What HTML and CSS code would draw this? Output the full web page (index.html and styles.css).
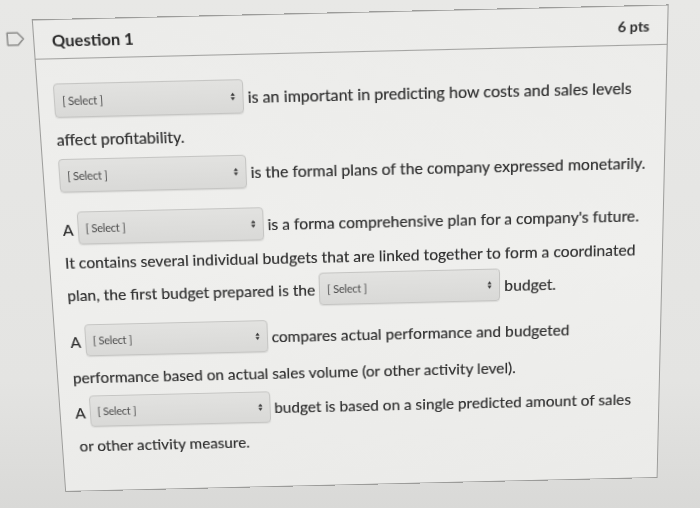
FILE: index.html
```html
<!DOCTYPE html>
<html lang="en">
<head>
<meta charset="utf-8">
<title>Question 1</title>
<link rel="stylesheet" href="styles.css">
</head>
<body>
<div class="page">
  <div class="stage">
    <div class="gutter">
      <svg class="flag" width="18" height="14" viewBox="0 0 18 14" aria-hidden="true">
        <path d="M1.2 1.2 H11.2 L16.6 7 L11.2 12.8 H1.2 Z" fill="none" stroke="#8d8d8b" stroke-width="1.5" stroke-linejoin="round"/>
      </svg>
    </div>
    <div class="card">
      <div class="card-head">
        <h2 class="q-title">Question 1</h2>
        <span class="pts">6 pts</span>
      </div>
      <div class="card-body">
        <div class="line l1">
          <span class="sel"><span class="sel-text">[ Select ]</span><svg class="arrows" width="6" height="10" viewBox="0 0 6 10"><path d="M0.5 4 L3 0.5 L5.5 4 Z M0.5 6 L3 9.5 L5.5 6 Z" fill="#333"/></svg></span>
          <span class="txt">is an important in predicting how costs and sales levels</span>
        </div>
        <div class="line l2"><span class="txt">affect profitability.</span></div>
        <div class="line l3">
          <span class="sel"><span class="sel-text">[ Select ]</span><svg class="arrows" width="6" height="10" viewBox="0 0 6 10"><path d="M0.5 4 L3 0.5 L5.5 4 Z M0.5 6 L3 9.5 L5.5 6 Z" fill="#333"/></svg></span>
          <span class="txt">is the formal plans of the company expressed monetarily.</span>
        </div>
        <div class="line l4">
          <span class="txt art">A</span>
          <span class="sel"><span class="sel-text">[ Select ]</span><svg class="arrows" width="6" height="10" viewBox="0 0 6 10"><path d="M0.5 4 L3 0.5 L5.5 4 Z M0.5 6 L3 9.5 L5.5 6 Z" fill="#333"/></svg></span>
          <span class="txt">is a forma comprehensive plan for a company's future.</span>
        </div>
        <div class="line l5"><span class="txt">It contains several individual budgets that are linked together to form a coordinated</span></div>
        <div class="line l6">
          <span class="txt">plan, the first budget prepared is the</span>
          <span class="sel sel-short"><span class="sel-text">[ Select ]</span><svg class="arrows" width="6" height="10" viewBox="0 0 6 10"><path d="M0.5 4 L3 0.5 L5.5 4 Z M0.5 6 L3 9.5 L5.5 6 Z" fill="#333"/></svg></span>
          <span class="txt">budget.</span>
        </div>
        <div class="line l7">
          <span class="txt art">A</span>
          <span class="sel"><span class="sel-text">[ Select ]</span><svg class="arrows" width="6" height="10" viewBox="0 0 6 10"><path d="M0.5 4 L3 0.5 L5.5 4 Z M0.5 6 L3 9.5 L5.5 6 Z" fill="#333"/></svg></span>
          <span class="txt">compares actual performance and budgeted</span>
        </div>
        <div class="line l8"><span class="txt">performance based on actual sales volume (or other activity level).</span></div>
        <div class="line l9">
          <span class="txt art">A</span>
          <span class="sel"><span class="sel-text">[ Select ]</span><svg class="arrows" width="6" height="10" viewBox="0 0 6 10"><path d="M0.5 4 L3 0.5 L5.5 4 Z M0.5 6 L3 9.5 L5.5 6 Z" fill="#333"/></svg></span>
          <span class="txt">budget is based on a single predicted amount of sales</span>
        </div>
        <div class="line l10"><span class="txt">or other activity measure.</span></div>
      </div>
    </div>
  </div>
</div>
</body>
</html>
```

FILE: styles.css
```css
html, body {
  margin: 0;
  padding: 0;
}

body {
  width: 700px;
  height: 508px;
  overflow: hidden;
  background: linear-gradient(180deg, #e8e8e6 0%, #e4e4e2 75%, #d9d9d7 100%);
  font-family: Lato, "Open Sans", "Liberation Sans", sans-serif;
  color: #2e2e2e;
}

.page {
  padding: 19px 0 0 1px;
}

.stage {
  display: flex;
  align-items: flex-start;
  transform-origin: 355px 238px;
  transform: perspective(800px) rotateZ(-1.35deg) rotateX(-7deg);
}

.gutter {
  width: 48px;
  flex: none;
  display: flex;
  justify-content: flex-start;
  padding-left: 22px;
  padding-top: 11px;
  box-sizing: border-box;
}

.flag {
  display: block;
}

.card {
  width: 614px;
  flex: none;
  border: 1px solid #9c9c9a;
  background: linear-gradient(180deg, #ececea 0%, #efefed 50%, #ebebe9 100%);
  box-sizing: border-box;
}

.card-head {
  height: 36px;
  border-bottom: 1px solid #a3a3a1;
  display: flex;
  align-items: center;
  justify-content: space-between;
  padding: 0 17px 0 17px;
}

.q-title {
  margin: 0;
  font-size: 16px;
  font-weight: 700;
  color: #2b2b2b;
}

.pts {
  font-size: 14px;
  font-weight: 700;
  color: #2f2f2f;
}

.card-body {
  padding: 23px 15px 32px 15px;
}

.line {
  height: 33px;
  display: flex;
  align-items: center;
  gap: 4px;
  font-size: 15.7px;
  white-space: nowrap;
}

.txt {
  text-shadow: 0 0 0.3px rgba(40, 40, 40, 0.5);
}

.art {
  padding-top: 3px;
}

.l2 { margin-top: 4px; }
.l3 { margin-top: 3px; }
.l4 { margin-top: 19px; }
.l5 { margin-top: 1px; }
.l6 { margin-top: 0; }
.l7 { margin-top: 14px; }
.l8 { margin-top: 5px; }
.l9 { margin-top: 3px; }
.l10 { margin-top: 3px; padding-left: 2px; }

.sel {
  width: 185px;
  height: 33px;
  flex: none;
  box-sizing: border-box;
  display: flex;
  align-items: center;
  justify-content: space-between;
  padding: 0 7px 0 7px;
  border: 1px solid #c5c5c3;
  border-radius: 4px;
  background: linear-gradient(180deg, #e2e2e0 0%, #d9d9d7 100%);
  box-shadow: 0 1px 1px rgba(0, 0, 0, 0.08);
}

.sel-short {
  width: 182px;
}

.sel-text {
  font-size: 11px;
  color: #4a4a4a;
  letter-spacing: -0.2px;
}

.arrows {
  display: block;
  width: 5px;
  height: 9px;
}
```
